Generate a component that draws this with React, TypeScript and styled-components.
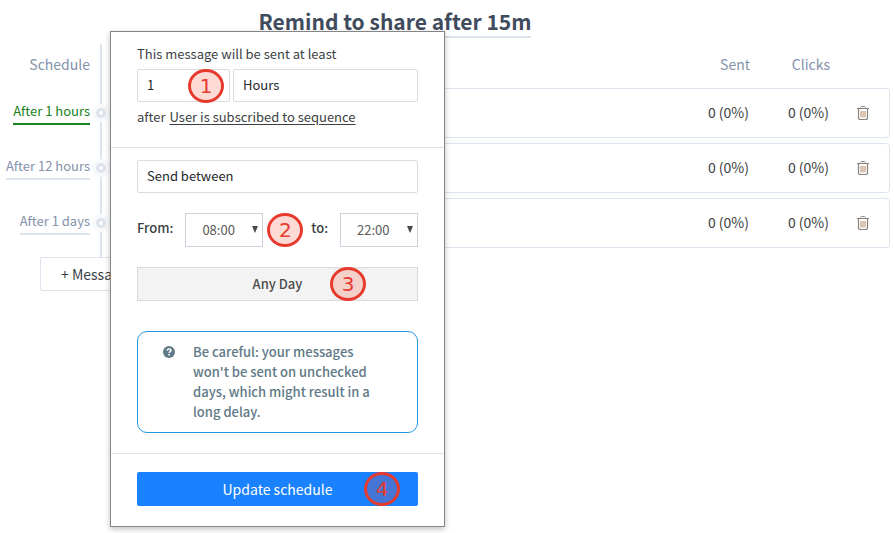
import React from "react";
import styled, { createGlobalStyle, css } from "styled-components";

const GlobalStyle = createGlobalStyle`
  *, *::before, *::after { box-sizing: border-box; }
  body {
    margin: 0;
    background: #fff;
    color: #3c3f44;
    font-family: "Source Sans Pro", "Noto Sans CJK SC", sans-serif;
    font-size: 13px;
    line-height: 20px;
  }
  button, input, select { font: inherit; color: inherit; margin: 0; }
`;

const line = "#dde3ec";
const muted = "#8492ab";

const Page = styled.main`
  position: relative;
  min-height: 100vh;
  overflow: hidden;
`;

const Header = styled.header`
  display: flex;
  justify-content: center;
  padding: 6px 104px 6px 0;
`;

const Title = styled.h1`
  margin: 0;
  border-bottom: 2px solid ${line};
  color: #414b5e;
  font-size: 21px;
  line-height: 30px;
  font-weight: 700;
`;

const Timeline = styled.section`
  position: relative;
  display: flex;
  flex-direction: column;
  gap: 5px;
  padding: 0 4px 9px 0;

  &::before {
    content: "";
    position: absolute;
    left: 100px;
    top: 0;
    bottom: 0;
    width: 2px;
    background: ${line};
  }
`;

const gridRow = css`
  display: grid;
  grid-template-columns: 90px 21px 1fr;
  align-items: center;
`;

const HeadRow = styled.div`
  ${gridRow}
  height: 39px;
  color: ${muted};
  font-size: 14px;
`;

const HeadLabel = styled.div`
  grid-column: 1;
  text-align: right;
`;

const HeadStats = styled.div`
  grid-column: 3;
  display: flex;
  justify-content: flex-end;
  padding-right: 60px;
`;

const Stat = styled.div`
  width: 80px;
  text-align: right;
`;

const Row = styled.div`
  ${gridRow}
`;

const DelayLink = styled.a<{ $active?: boolean }>`
  justify-self: end;
  padding-bottom: 2px;
  border-bottom: 2px solid ${(p) => (p.$active ? "#188320" : line)};
  color: ${(p) => (p.$active ? "#188320" : muted)};
  text-decoration: none;
  white-space: nowrap;
`;

const Dot = styled.span`
  position: relative;
  justify-self: center;
  width: 18px;
  height: 18px;
  border: 4px solid #f7f9fb;
  border-radius: 50%;
  background: #fff;

  &::before {
    content: "";
    position: absolute;
    inset: 0;
    border: 3px solid ${line};
    border-radius: 50%;
  }
`;

const Card = styled.div`
  display: flex;
  align-items: center;
  justify-content: flex-end;
  height: 50px;
  padding: 0 20px 2px 0;
  border: 1px solid ${line};
  border-radius: 4px;
  font-size: 14px;
`;

const TrashButton = styled.button`
  display: flex;
  padding: 2px 0 0;
  margin-left: 28px;
  border: 0;
  background: none;
  color: #87837f;
`;

const AddButton = styled.button`
  height: 34px;
  padding: 0 20px;
  margin-left: 40px;
  border: 1px solid ${line};
  border-radius: 2px;
  background: #fff;
  font-size: 14px;
`;

const Popover = styled.form`
  position: absolute;
  top: 31px;
  left: 110px;
  width: 335px;
  border: 1px solid #858585;
  background: #fff;
  box-shadow: 0 2px 6px rgba(0, 0, 0, 0.25);
`;

const Section = styled.div`
  display: flex;
  flex-direction: column;
  padding: 12px 26px 20px;

  & + & {
    border-top: 1px solid ${line};
  }
`;

const ActionSection = styled(Section)`
  padding: 18px 26px 20px;
`;

const Fields = styled.div`
  display: grid;
  grid-template-columns: 93px 1fr;
  gap: 3px;
  margin: 5px 0;
`;

const fieldBox = css`
  width: 100%;
  height: 33px;
  padding: 0 9px 2px;
  border: 1px solid #dcdcdc;
  border-radius: 2px;
  background: #fff;
  color: #25282c;
  appearance: none;
`;

const TextField = styled.input`
  ${fieldBox}
`;

const Choice = styled.select`
  ${fieldBox}
`;

const Text = styled.label`
  display: block;
`;

const Trigger = styled.p`
  display: flex;
  gap: 4px;
  margin: 0;
`;

const TriggerLink = styled.a`
  color: inherit;
  text-decoration: underline;
  text-underline-offset: 2px;
`;

const Times = styled.div`
  display: flex;
  justify-content: space-between;
  align-items: center;
  margin: 20px 0;
`;

const TimeGroup = styled.div`
  display: flex;
  align-items: center;
  gap: 12px;
`;

const TimeLabel = styled.label`
  padding-bottom: 4px;
  font-weight: 500;
`;

const TimeBox = styled.div`
  position: relative;
  width: 78px;

  &::after {
    content: "";
    position: absolute;
    right: 5px;
    top: 13px;
    border: solid transparent;
    border-width: 7px 3px 0;
    border-top-color: #4a4a4a;
    pointer-events: none;
  }
`;

const TimeSelect = styled.select`
  display: block;
  width: 100%;
  height: 34px;
  padding: 0 16px;
  border: 1px solid #cdd1dc;
  border-radius: 0;
  background: #fff;
  color: #5a5a5a;
  appearance: none;
`;

const DayButton = styled.button`
  height: 34px;
  border: 1px solid #dadada;
  background: #f3f3f3;
  color: #4c4c4c;
  font-weight: 500;
`;

const Note = styled.div`
  display: flex;
  gap: 18px;
  margin-top: 30px;
  padding: 10px 40px 10px 25px;
  border: 1px solid #2199e0;
  border-radius: 10px;
  color: #607987;
  font-weight: 500;

  svg {
    flex: none;
    margin-top: 4px;
  }
`;

const NoteText = styled.p`
  margin: 0;
`;

const SubmitButton = styled.button`
  height: 34px;
  border: 0;
  border-radius: 2px;
  background: #1a82ff;
  color: #fff;
  font-size: 14px;
`;

const Anchor = styled.div`
  position: relative;
  display: grid;
`;

const Marker = styled.span<{ $right: number }>`
  position: absolute;
  z-index: 1;
  right: ${(p) => p.$right}px;
  top: 0;
  width: 36px;
  height: 34px;
  border: 3px solid #e8392d;
  border-radius: 50%;
  background: rgba(248, 70, 45, 0.2);
  color: #e8392d;
  font-family: "DejaVu Sans", sans-serif;
  font-size: 20px;
  font-weight: 400;
  line-height: 28px;
  text-align: center;
  pointer-events: none;
`;

const TrashIcon = () => (
  <svg width="12" height="14" viewBox="0 0 12 14" fill="none" stroke="currentColor">
    <path d="M0 2.5h12" />
    <path d="M3.500 2.500V1.500L4.500 .5h3l1 1v1" />
    <path d="M1.500 3v9.500l1 1h7l1-1V3" strokeWidth="1.200" />
    <path d="M4 5v6.500M6 5v6.500M8 5v6.500" stroke="#b98a66" />
  </svg>
);

const HelpIcon = () => (
  <svg width="12" height="12" viewBox="0 0 12 12">
    <circle cx="6" cy="6" r="6" fill="currentColor" />
    <path
      d="M4.100 4.500C4.300 3.500 5 3 6 3C7.100 3 7.900 3.600 7.900 4.500C7.900 5.700 6.100 5.700 6.100 7.100"
      fill="none"
      stroke="#fff"
      strokeWidth="1.500"
    />
    <path d="M5.300 8h1.600v1.500H5.300z" fill="#fff" />
  </svg>
);

const messages = [
  { delay: "After 1 hours", active: true },
  { delay: "After 12 hours", active: false },
  { delay: "After 1 days", active: false },
];

const hours = Array.from({ length: 24 }, (_, h) => `${String(h).padStart(2, "0")}:00`);

const HourPicker = ({ id, value }: { id: string; value: string }) => (
  <TimeBox>
    <TimeSelect id={id} defaultValue={value}>
      {hours.map((h) => (
        <option key={h}>{h}</option>
      ))}
    </TimeSelect>
  </TimeBox>
);

export default function App() {
  return (
    <>
      <GlobalStyle />
      <Page>
        <Header>
          <Title>Remind to share after 15m</Title>
        </Header>
        <Timeline>
          <HeadRow>
            <HeadLabel>Schedule</HeadLabel>
            <HeadStats>
              <Stat>Sent</Stat>
              <Stat>Clicks</Stat>
            </HeadStats>
          </HeadRow>
          {messages.map((m) => (
            <Row key={m.delay}>
              <DelayLink href="#" $active={m.active}>
                {m.delay}
              </DelayLink>
              <Dot />
              <Card>
                <Stat>0 (0%)</Stat>
                <Stat>0 (0%)</Stat>
                <TrashButton type="button" aria-label="Delete message">
                  <TrashIcon />
                </TrashButton>
              </Card>
            </Row>
          ))}
        </Timeline>
        <AddButton type="button">+ Message</AddButton>

        <Popover onSubmit={(e) => e.preventDefault()}>
          <Section>
            <Text htmlFor="amount">This message will be sent at least</Text>
            <Fields>
              <Anchor>
                <TextField id="amount" defaultValue="1" />
                <Marker $right={6}>1</Marker>
              </Anchor>
              <Choice aria-label="Unit" defaultValue="Hours">
                <option>Minutes</option>
                <option>Hours</option>
                <option>Days</option>
              </Choice>
            </Fields>
            <Trigger>
              after <TriggerLink href="#">User is subscribed to sequence</TriggerLink>
            </Trigger>
          </Section>
          <Section>
            <Choice aria-label="Sending window" defaultValue="Send between">
              <option>Send between</option>
              <option>Send any time</option>
            </Choice>
            <Times>
              <Anchor>
                <TimeGroup>
                  <TimeLabel htmlFor="from">From:</TimeLabel>
                  <HourPicker id="from" value="08:00" />
                </TimeGroup>
                <Marker $right={-40}>2</Marker>
              </Anchor>
              <TimeGroup>
                <TimeLabel htmlFor="to">to:</TimeLabel>
                <HourPicker id="to" value="22:00" />
              </TimeGroup>
            </Times>
            <Anchor>
              <DayButton type="button">Any Day</DayButton>
              <Marker $right={52}>3</Marker>
            </Anchor>
            <Note>
              <HelpIcon />
              <NoteText>
                Be careful: your messages won't be sent on unchecked days, which might result in a
                long delay.
              </NoteText>
            </Note>
          </Section>
          <ActionSection>
            <Anchor>
              <SubmitButton type="submit">Update schedule</SubmitButton>
              <Marker $right={18}>4</Marker>
            </Anchor>
          </ActionSection>
        </Popover>
      </Page>
    </>
  );
}
